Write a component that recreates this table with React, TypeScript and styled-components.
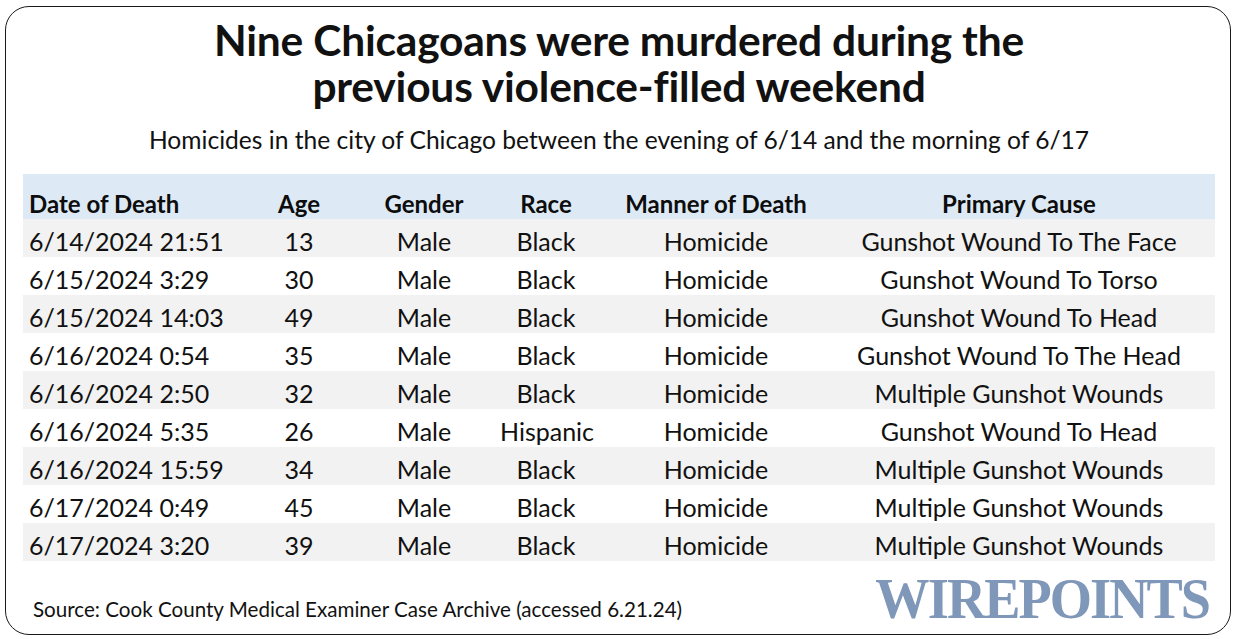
import React from "react";
import styled, { createGlobalStyle } from "styled-components";

const GlobalStyle = createGlobalStyle`
  html, body {
    margin: 0;
    padding: 0;
    background: #ffffff;
  }
  body {
    font-family: "Lato", "Noto Sans", sans-serif;
    color: #111111;
  }
`;

const rows = [
  ["6/14/2024 21:51", "13", "Male", "Black", "Homicide", "Gunshot Wound To The Face"],
  ["6/15/2024 3:29", "30", "Male", "Black", "Homicide", "Gunshot Wound To Torso"],
  ["6/15/2024 14:03", "49", "Male", "Black", "Homicide", "Gunshot Wound To Head"],
  ["6/16/2024 0:54", "35", "Male", "Black", "Homicide", "Gunshot Wound To The Head"],
  ["6/16/2024 2:50", "32", "Male", "Black", "Homicide", "Multiple Gunshot Wounds"],
  ["6/16/2024 5:35", "26", "Male", "Hispanic", "Homicide", "Gunshot Wound To Head"],
  ["6/16/2024 15:59", "34", "Male", "Black", "Homicide", "Multiple Gunshot Wounds"],
  ["6/17/2024 0:49", "45", "Male", "Black", "Homicide", "Multiple Gunshot Wounds"],
  ["6/17/2024 3:20", "39", "Male", "Black", "Homicide", "Multiple Gunshot Wounds"],
];

const headers = ["Date of Death", "Age", "Gender", "Race", "Manner of Death", "Primary Cause"];

const App = () => {
  return (
    <>
      <GlobalStyle />
      <Frame>
        <Title>
          Nine Chicagoans were murdered during the
          <br />
          previous violence-filled weekend
        </Title>
        <Subtitle>
          Homicides in the city of Chicago between the evening of 6/14 and the
          morning of 6/17
        </Subtitle>
        <Table>
          <HeaderRow>
            {headers.map((h, i) => (
              <HeadCell key={h} $first={i === 0}>
                {h}
              </HeadCell>
            ))}
          </HeaderRow>
          {rows.map((r, idx) => (
            <Row key={idx} $shaded={idx % 2 === 0}>
              {r.map((c, i) => (
                <Cell key={i} $first={i === 0}>
                  {c}
                </Cell>
              ))}
            </Row>
          ))}
        </Table>
        <Footer>
          <Source>
            Source: Cook County Medical Examiner Case Archive (accessed 6.21.24)
          </Source>
          <Logo>WIREPOINTS</Logo>
        </Footer>
      </Frame>
    </>
  );
};

const Frame = styled.div`
  box-sizing: border-box;
  margin: 6px 0 0 5px;
  width: 1226px;
  height: 629px;
  border: 1.5px solid #1a1a1a;
  border-radius: 24px;
  padding: 10px 15px 0 17px;
  display: flex;
  flex-direction: column;
`;

const Title = styled.h1`
  margin: 0;
  text-align: center;
  font-family: "Lato", sans-serif;
  font-weight: 700;
  font-size: 42.5px;
  line-height: 46px;
  letter-spacing: -0.2px;
  color: #111111;
`;

const Subtitle = styled.div`
  margin-top: 16px;
  text-align: center;
  font-size: 24.6px;
  line-height: 30px;
  color: #111111;
`;

const Table = styled.div`
  margin-top: 19px;
  width: 1192px;
  display: flex;
  flex-direction: column;
`;

const columns = "227px 98px 152px 92px 248px 358px 17px";

const HeaderRow = styled.div`
  display: grid;
  grid-template-columns: ${columns};
  align-items: end;
  height: 45px;
  background: #ddeaf5;
  box-sizing: border-box;
`;

const Row = styled.div<{ $shaded: boolean }>`
  display: grid;
  grid-template-columns: ${columns};
  align-items: center;
  height: 38px;
  padding-top: 5px;
  box-sizing: border-box;
  background: ${(p) => (p.$shaded ? "#f2f2f2" : "#ffffff")};
`;

const Cell = styled.div<{ $first?: boolean }>`
  font-size: 25px;
  line-height: 30px;
  white-space: nowrap;
  text-align: ${(p) => (p.$first ? "left" : "center")};
  padding-left: ${(p) => (p.$first ? "6px" : "0")};
`;

const HeadCell = styled(Cell)`
  font-size: 24px;
  font-weight: 700;
  color: #0d0d0d;
`;

const Footer = styled.div`
  display: flex;
  align-items: flex-end;
  justify-content: space-between;
  margin-top: 15px;
  padding-right: 6px;
`;

const Source = styled.div`
  font-size: 20.6px;
  line-height: 24px;
  padding-left: 10px;
  padding-bottom: 1px;
  color: #111111;
`;

const Logo = styled.div`
  font-family: "Liberation Serif", "DejaVu Serif", serif;
  font-weight: 900;
  font-size: 56px;
  line-height: 46px;
  letter-spacing: -2px;
  color: #7f97b8;
  transform: scaleX(0.97);
  transform-origin: right center;
`;

export default App;
